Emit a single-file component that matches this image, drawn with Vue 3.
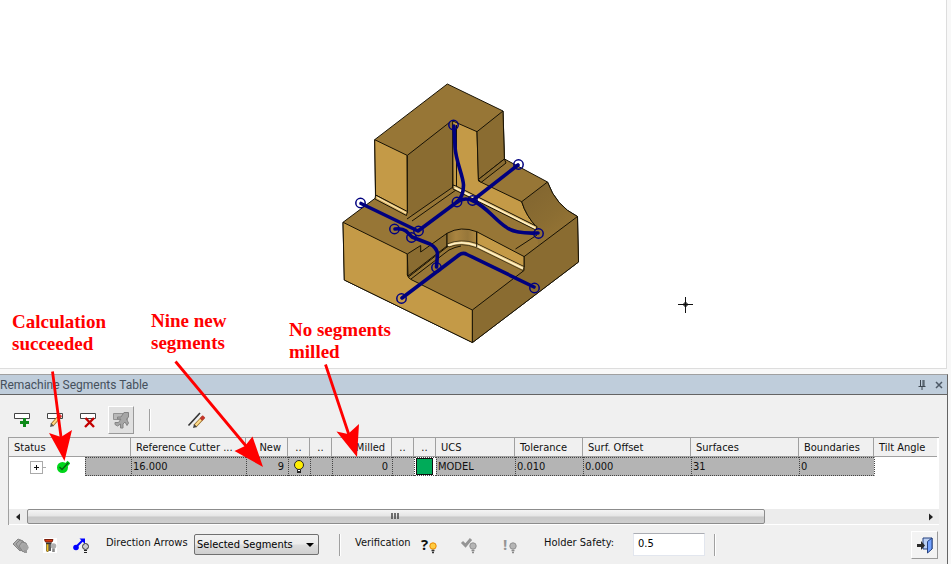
<script setup>
import { ref } from 'vue'

const arrows = ref('Selected Segments')
const safety = ref('0.5')

const nodes = [
  [453.5, 125], [518.5, 164.5], [457, 202], [472.5, 200.5], [360.5, 203], [418.5, 231],
  [394.5, 229], [411.5, 237.5], [436.5, 267.5], [538.5, 233.5], [401.5, 298.5], [534.5, 288]
]
const notes = [
  { id: 'a', lines: ['Calculation', 'succeeded'] },
  { id: 'b', lines: ['Nine new', 'segments'] },
  { id: 'c', lines: ['No segments', 'milled'] }
]
</script>

<template>
  <main class="page">
    <section class="canvas" aria-label="Model view">
      <svg class="scene" width="947" height="368" viewBox="0 0 947 368">
        <defs>
          <linearGradient id="bend" x1="0" x2="1">
            <stop offset="0" stop-color="#8f7034" />
            <stop offset="0.3" stop-color="#a98440" />
            <stop offset="0.7" stop-color="#97773a" />
            <stop offset="1" stop-color="#b08a42" />
          </linearGradient>
          <linearGradient id="slope" x1="0" y1="0" x2="0.7" y2="1">
            <stop offset="0" stop-color="#806430" />
            <stop offset="0.6" stop-color="#8b6d32" />
            <stop offset="1" stop-color="#977636" />
          </linearGradient>
        </defs>
        <g stroke="#171205" stroke-width="1" stroke-linejoin="round" fill="none">
          <path fill="#977636" d="M447.3 84 503 111 504.5 159 547.5 182Q556 206 577.5 216.5L578.5 262 472.5 342.5 344.3 280 343 222.3 375.5 198 374.7 139.7Z" />
          <path fill="#c49a47" d="M374.7 139.7 407 155.3 407.4 212 375.6 195Z" />
          <path fill="#8a6c31" stroke="none" d="M407 155.3 450 122 452.7 121V187L413 215.5 407.4 213Z" />
          <path d="M407.4 213V155.3L450 122M452.7 123V187" />
          <path fill="#d9b263" d="M375.6 195 407.4 211.5 406.5 215.5 375 199Z" />
          <path stroke="#fbe5ae" stroke-width="1.2" d="M377 197.5 406 213" />
          <path fill="#c49a47" d="M452.7 121 477 131.7 478.5 181 521.7 201.7Q526 216 537 227.5L453 186Z" />
          <path d="M456.5 125V186" />
          <path fill="#8a6c31" d="M477 131.7 503 111 504.4 159 478.4 179.5Z" />
          <path fill="#8a6c31" d="M478.4 179.5 504.4 159 506 163 481 182.5Z" />
          <path fill="url(#slope)" d="M521.7 201.7 547.5 182Q556 206 577.5 216.5L538 246 537 228Q526 216 521.7 201.7Z" stroke="none" />
          <path d="M521.7 201.7 547.5 182Q556 206 577.5 216.5M521.7 201.7Q526 216 537 227.5" />
          <path fill="#e3c078" d="M453 185 456 186 537 226.5 536 230 453 189Z" />
          <path stroke="#fff2c8" stroke-width="1.500" d="M455 188 535 228" />
          <path d="M407 219 453 187M412 221 456 190" />
          <path d="M537 235 515.5 249" />
          <path fill="#8a6c31" d="M577.5 216.5 578.5 262 472.5 342.5 472.3 310 524 270.5V256.7Z" />
          <path fill="#c49a47" d="M343 222.3 407.3 254V275Q408 278 411 279.5L472.3 310V342.5L344.3 280Z" />
          <path fill="#8a6c31" d="M407.3 254 420.7 245.5V252L447 233.3V246L408 276Z" />
          <path fill="url(#bend)" d="M447 233.3Q461 225.5 476.7 231.7V247Q461 240 447 247Z" />
          <path fill="#c49a47" d="M476.7 231.7 524 256.5V267L476.7 244Z" />
          <path fill="#e3c078" stroke-width="0.700" d="M447 244Q461 238 476.7 243.5L524 266.5 523 270.5 476 247.5Q461 242 449 247Z" />
          <path stroke="#fff2c8" stroke-width="1.600" d="M448 245.5Q461 240 476 245.5L523 268.5" />
          <path d="M411 279 449 250Q455 247 461 246" />
          <path d="M408.5 277 447 247M476.7 231.7V247" />
        </g>
        <g stroke="#00007f" stroke-width="3.6" stroke-linejoin="round" stroke-linecap="round" fill="none">
          <path d="M454 126 455 147C456 162 463 175 463.5 185Q463.500 197 457 202" />
          <path d="M457 202Q464 197 472.500 200.500L518 165" />
          <path d="M472.500 200.500C487 207 495 220 506 227Q514 234 538 233" />
          <path d="M361 203.500 418 231 457 202" />
          <path d="M395 229Q402 228 406 231L412 237 430 244Q437 248 437.500 254L436.500 267" />
          <path d="M402 298 459 255Q463 252 467 254.500L534 287" />
        </g>
        <g stroke="#00007f" stroke-width="1.5" fill="none">
          <circle v-for="(n, i) in nodes" :key="i" :cx="n[0]" :cy="n[1]" r="4.7" />
        </g>
        <path d="M678 304.500H693M685.500 297V313M684 303H687V306H684Z" fill="none" stroke="#111" />
      </svg>
    </section>

    <section class="dock">
      <header class="title">
        <h1>Remachine Segments Table</h1>
        <button class="mini" aria-label="Pin">
          <svg width="10" height="10" viewBox="0 0 10 10"><path d="M3.500 0V6M6 0V6M7 0V6M1.500 6.500H8.500M5 7V10" stroke="#3d4650" fill="none" /></svg>
        </button>
        <button class="mini" aria-label="Close">
          <svg width="10" height="10" viewBox="0 0 10 10"><path d="M2 2 8 8M8 2 2 8" stroke="#4d5966" stroke-width="1.500" fill="none" /></svg>
        </button>
      </header>

      <div class="tools">
        <button class="tool" aria-label="Add segment">
          <svg width="20" height="20" viewBox="0 0 20 20"><path d="M2.500 3.500H17.500V8.500H2.500Z" fill="#fff" stroke="#444" /><path d="M8 12.500H17M12.500 8V17" stroke="#0d8a18" stroke-width="3" /></svg>
        </button>
        <button class="tool" aria-label="Edit segment">
          <svg width="20" height="20" viewBox="0 0 20 20"><path d="M2.500 3.500H17.500V8.500H2.500Z" fill="#fff" stroke="#444" /><path d="M7 15 15 6" stroke="#9a6a1c" stroke-width="3.600" /><path d="M7.500 14.500 14 7" stroke="#ffd884" stroke-width="2" /><path d="M14 7 16 5" stroke="#d33" stroke-width="3.200" /><path d="M5 17 6 13 9 16Z" fill="#555" /></svg>
        </button>
        <button class="tool" aria-label="Delete segment">
          <svg width="20" height="20" viewBox="0 0 20 20"><path d="M2.500 3.500H17.500V8.500H2.500Z" fill="#fff" stroke="#444" /><path d="M7.500 8 16 17M16 8 7 17" stroke="#c40000" stroke-width="2.400" /></svg>
        </button>
        <button class="tool raised" aria-label="Calculate" disabled>
          <svg width="20" height="20" viewBox="0 0 20 20"><path d="M2.500 3.500H16.500V9.500H2.500Z" fill="#b8b8b8" stroke="#929292" /><path d="M13 2.500H17.500V7L15.500 9 17.500 13 16 15.500 14 12 12 14V18H9.500V14L6.500 16 4 14.500V12.500H7.500L10 9H6.500V7H10Z" fill="#a6a6a6" stroke="#848484" /></svg>
        </button>
        <span class="rule"></span>
        <button class="tool lines" aria-label="Edit lines">
          <svg width="20" height="20" viewBox="0 0 20 20"><path d="M1.500 15.500 13 3" stroke="#333" stroke-width="1.600" /><path d="M8 16 16.500 7" stroke="#936a26" stroke-width="3.800" /><path d="M8.500 15.500 14 9.500" stroke="#ffdc8a" stroke-width="2.200" /><path d="M14 9.500 17 6.500" stroke="#c3352c" stroke-width="3.400" /><path d="M6 18 7 14 10 17Z" fill="#444" /></svg>
        </button>
      </div>

      <div class="grid">
        <table>
          <colgroup>
            <col class="c-tree"><col class="c-gap"><col class="c-cut"><col class="c-new"><col class="c-dot"><col class="c-dot">
            <col class="c-mil"><col class="c-dot"><col class="c-dot"><col class="c-ucs"><col class="c-tol"><col class="c-wide">
            <col class="c-wide"><col class="c-bou"><col>
          </colgroup>
          <thead>
            <tr>
              <th colspan="2">Status</th><th>Reference Cutter ...</th><th class="num">New</th><th class="dots">..</th><th class="dots">..</th>
              <th class="num">Milled</th><th class="dots">..</th><th class="dots">..</th><th>UCS</th><th>Tolerance</th><th>Surf. Offset</th>
              <th>Surfaces</th><th>Boundaries</th><th>Tilt Angle</th>
            </tr>
          </thead>
          <tbody>
            <tr>
              <td class="tree">
                <div class="branch">
                  <button class="expand" aria-label="Expand"><svg width="11" height="11" viewBox="0 0 11 11"><path d="M3 5.500H8M5.500 3V8" stroke="#111" /></svg></button>
                  <span class="twig"></span>
                  <svg width="14" height="14" viewBox="0 0 14 14"><circle cx="6.500" cy="7.500" r="5.500" fill="#00d61b" /><path d="M3 6.500 6 9.500 13 2" stroke="#00d61b" stroke-width="4" fill="none" /><path d="M3.500 7 6 9.500 12.500 2.500" stroke="#075c10" stroke-width="1.300" fill="none" /></svg>
                </div>
              </td>
              <td></td><td>16.000</td><td class="num">9</td>
              <td class="pic"><svg width="14" height="16" viewBox="0 0 14 16"><circle cx="6" cy="6" r="4.500" fill="#ffee00" stroke="#222" /><path d="M4 10.500H8V14H4Z" fill="#222" /><path d="M5 11.500H7" stroke="#fff" /></svg></td>
              <td></td><td class="num">0</td><td></td>
              <td class="pic sw"><span class="swatch"></span></td>
              <td>MODEL</td><td>0.010</td><td>0.000</td><td>31</td><td>0</td><td class="blank"></td>
            </tr>
          </tbody>
        </table>
        <div class="scroll">
          <button class="arrow" aria-label="Scroll left"><svg width="5" height="8" viewBox="0 0 5 8"><path d="M4 0.500V7.500L0 4Z" fill="#222" /></svg></button>
          <div class="track"><div class="thumb"><svg width="9" height="7" viewBox="0 0 9 7"><path d="M1 0V6M4 0V6M7 0V6" stroke="#444" stroke-width="1.500" /></svg></div></div>
          <button class="arrow" aria-label="Scroll right"><svg width="5" height="8" viewBox="0 0 5 8"><path d="M1 0.500V7.500L5 4Z" fill="#222" /></svg></button>
        </div>
      </div>

      <footer class="foot">
        <div class="icons">
          <button class="ico" aria-label="Show surfaces" disabled>
            <svg width="20" height="20" viewBox="0 0 20 20"><g fill="#a9a9a9" stroke="#858585"><path d="M2 9 7 4 12 6 14 12 9 16Z" /><path d="M5 9 9 5 13 7 15 12 10 16Z" /><path d="M8 11 11 7 15 8 17 13 12 17Z" /></g><circle cx="14.500" cy="12.500" r="3" fill="#a5a5a5" /><path d="M13 15H16V18H13Z" fill="#999" /></svg>
          </button>
          <button class="ico" aria-label="Show tool">
            <svg width="20" height="20" viewBox="0 0 20 20"><path d="M2 3H16V18H2Z" fill="#fff" /><path d="M3.500 4.500H12L11 7H4.500Z" fill="#d8380f" stroke="#7d1c08" /><path d="M5 7.500H10.500V9H5Z" fill="#333" /><path d="M5.500 9V16L6.500 17 7.500 16V9Z" fill="#f2be20" stroke="#4d3a05" stroke-width="0.600" /><path d="M9 9V16" stroke="#222" stroke-width="1.500" /><circle cx="12.500" cy="11" r="2.800" fill="#b0b0b0" /><path d="M11.200 13.500H13.800V17H11.200Z" fill="#888" /></svg>
          </button>
          <button class="ico" aria-label="Show direction">
            <svg width="20" height="20" viewBox="0 0 20 20"><circle cx="5" cy="12.500" r="2.800" fill="#00f" /><path d="M5 12 12 5" stroke="#00f" stroke-width="2" /><path d="M8.500 3.500H14V9Z" fill="#00f" /><circle cx="14.500" cy="11.500" r="3" fill="#ccc" stroke="#333" /><path d="M13 15.500H16M13 17.500H16" stroke="#222" /></svg>
          </button>
        </div>
        <label for="dir" class="dir">Direction Arrows</label>
        <div class="pick">
          <select id="dir" v-model="arrows"><option>Selected Segments</option></select>
          <svg width="8" height="4" viewBox="0 0 8 4"><path d="M0 0H8L4 4Z" fill="#000" /></svg>
        </div>
        <span class="rule"></span>
        <span class="ver">Verification</span>
        <div class="checks">
          <button class="ico" aria-label="Unverified">
            <svg width="20" height="20" viewBox="0 0 20 20"><text x="2" y="15" class="mark">?</text><circle cx="14" cy="11" r="3.200" fill="#ffcc42" stroke="#e98800" /><path d="M12.500 15.500H15.500M13 17.500H15" stroke="#333" stroke-width="1.600" /></svg>
          </button>
          <button class="ico" aria-label="Verified" disabled>
            <svg width="20" height="20" viewBox="0 0 20 20"><path d="M2 7 5.500 10.500 11 4" stroke="#959595" stroke-width="3" fill="none" /><circle cx="13" cy="11" r="3.200" fill="#b5b5b5" stroke="#919191" /><path d="M11.500 15.500H14.500M12 17.500H14" stroke="#8a8a8a" stroke-width="1.600" /></svg>
          </button>
          <button class="ico" aria-label="Warning" disabled>
            <svg width="20" height="20" viewBox="0 0 20 20"><text x="2" y="15" class="mark dim">!</text><circle cx="12" cy="11" r="3.200" fill="#b5b5b5" stroke="#919191" /><path d="M10.500 15.500H13.500M11 17.500H13" stroke="#8a8a8a" stroke-width="1.600" /></svg>
          </button>
        </div>
        <label for="safe" class="holder">Holder Safety:</label>
        <input id="safe" v-model="safety" type="text">
        <span class="rule late"></span>
        <button class="exit" aria-label="Exit">
          <svg width="18" height="18" viewBox="0 0 18 18"><path d="M7 2H16V13H7Z" fill="#bcd0f3" stroke="#24407e" /><path d="M11.500 5.500 16 2V13L11.500 17Z" fill="#73a2ff" stroke="#24407e" /><path d="M1 8H5V5L9 9.500 5 14V11H1Z" fill="#2b2b2b" /></svg>
        </button>
      </footer>
    </section>

    <div class="overlay">
      <svg width="951" height="564" viewBox="0 0 951 564">
        <g stroke="#f00" stroke-width="2.800"><path d="M52.500 371.500 61 437M175.500 361.500 246 446M325.500 364.500 349 435" /></g>
        <g fill="#f00"><path d="M64.500 461 49 433 61 437 72 430Z" /><path d="M263 467 234.500 451 245 446 252.500 436.500Z" /><path d="M357 457 336.500 431.500 348 434 359 424Z" /></g>
      </svg>
      <p v-for="n in notes" :key="n.id" class="note" :class="n.id">{{ n.lines[0] }}<br>{{ n.lines[1] }}</p>
    </div>
  </main>
</template>

<style>
body { margin: 0; background: #f8f8f8; }
</style>

<style scoped>
* { box-sizing: border-box; }
.page { position: relative; overflow: hidden; font: 11px/14px "DejaVu Sans Condensed", "Noto Sans", sans-serif; color: #111; }
button { padding: 0; border: 0; background: none; display: flex; align-items: center; justify-content: center; }
.canvas { margin-right: 4px; background: #fff; border-right: 1px solid #ddd; border-bottom: 1px solid #ddd; overflow: hidden; }
.scene { display: block; }
.dock { margin: 5px 3px 0 0; background: #f0f0f0; border-top: 1px solid #a0a0a0; border-right: 1px solid #646464; }
.title { display: flex; align-items: center; height: 20px; gap: 7px; padding-right: 3px; background: #bfcddb; border-bottom: 1px solid #646464; }
h1 { flex: 1; margin: 0; font: 12px/18px Roboto, sans-serif; color: #45505c; }
.mini { width: 10px; height: 18px; }
.tools { display: flex; align-items: center; gap: 7px; height: 42px; padding: 8px 9px 0; }
.tool { width: 26px; height: 28px; }
.raised { background: #e0e0e0; border: 1px solid #999; border-top-color: #fff; border-left-color: #fff; }
.rule { width: 2px; height: 22px; margin: 0 8px; background: #a0a0a0; border-right: 1px solid #fff; }
.lines { margin-left: 18px; }
.grid { margin: 0 8px; background: #fff; border-top: 1px solid #a0a0a0; border-left: 1px solid #a0a0a0; }
table { width: calc(100% - 2px); border-collapse: separate; border-spacing: 0; table-layout: fixed; margin-bottom: 33px; }
.c-tree { width: 76px; } .c-gap { width: 46px; } .c-cut { width: 115px; } .c-new { width: 42px; } .c-dot { width: 22px; } .c-mil { width: 60px; }
.c-ucs { width: 79px; } .c-tol { width: 68px; } .c-wide { width: 108px; } .c-bou { width: 75px; }
th { height: 19px; padding: 2px 6px 0 5px; text-align: left; font-weight: 400; white-space: nowrap; background: #f0f0f0; border-right: 1px solid #a0a0a0; border-bottom: 1px solid #a0a0a0; }
th.dots { padding: 2px 0 0; text-align: center; }
th:last-child { border-right: 0; }
td { height: 19px; padding: 1px 4px 0 1px; background: #b4b4b4; border: 1px dotted #444; border-right-width: 0; white-space: nowrap; }
td.tree, td.blank { background: #fff; border-color: transparent; }
td.blank { border-left: 1px dotted #444; }
.num { text-align: right; }
.branch { display: flex; align-items: center; padding-left: 19px; }
.expand { width: 13px; height: 13px; border: 1px solid #aaa; background: #fff; }
.twig { width: 3px; height: 1px; margin-right: 10px; background: #aaa; }
td.pic { padding: 0; }
.pic svg { display: block; margin: 0 auto; }
td.sw { background: #fff; }
.swatch { display: block; height: 17px; margin: 0 3px 0 1px; background: #00ab59; border: 1px solid #111; }
.scroll { display: flex; height: 16px; background: #ececec; border-bottom: 1px solid #fff; }
.arrow { width: 18px; }
.track { flex: 1; }
.thumb { width: 82.5%; height: 15px; display: flex; align-items: center; justify-content: center; border: 1px solid #8c8c8c; border-radius: 2px; background: linear-gradient(#f4f4f4, #e4e4e4 48%, #c8c8c8 52%, #cfcfcf); }
.foot { display: flex; align-items: center; height: 39px; padding: 0 9px; }
.icons { display: flex; gap: 6px; }
.ico { width: 24px; height: 24px; }
.foot label, .ver { white-space: nowrap; padding-bottom: 3px; }
.dir { width: 88px; margin-left: 13px; }
.pick { position: relative; width: 125px; }
.pick svg { position: absolute; right: 5px; top: 9px; pointer-events: none; }
select { width: 100%; height: 21px; padding: 0 2px; appearance: none; font: inherit; color: #000; border: 1px solid #707070; border-radius: 2px; background: linear-gradient(#f2f2f2, #ebebeb 48%, #dddddd 52%, #cfcfcf); }
.foot .rule { margin: 0 14px 0 20px; }
.ver { width: 62px; }
.checks { display: flex; gap: 17px; }
.mark { font: bold 15px "Open Sans", sans-serif; fill: #111; }
.dim { fill: #959595; }
.holder { width: 89px; margin-left: 21px; }
input { width: 72px; height: 23px; padding: 0 4px 2px; font: inherit; color: #000; background: #fff; border: 1px solid #e2e6ee; border-top-color: #abadb3; }
.foot .late { margin: 0 0 0 9px; }
.exit { width: 27px; height: 28px; margin-left: auto; background: #f3f3f3; border: 1px solid #fff; border-right-color: #999; border-bottom-color: #999; }
.overlay { position: absolute; inset: 0; pointer-events: none; }
.note { position: absolute; margin: 0; font: bold 19px/22px "Liberation Serif", serif; color: #f00; white-space: nowrap; }
.a { left: 12px; top: 311px; } .b { left: 151px; top: 310px; } .c { left: 289px; top: 319px; }
</style>
